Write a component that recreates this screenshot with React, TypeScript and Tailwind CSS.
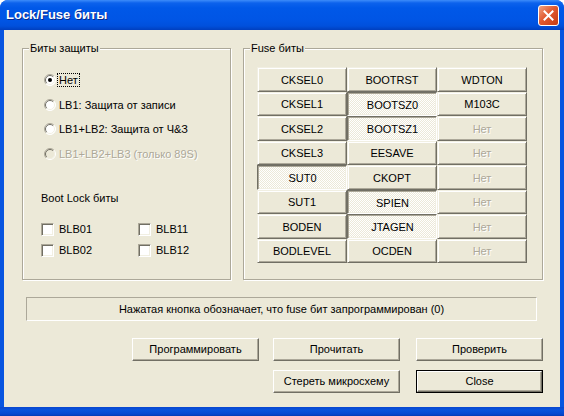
import type { ReactNode } from 'react';

type Fuse = { name: string; on?: boolean; off?: boolean };

const fuses: Fuse[] = [
  { name: 'CKSEL0' }, { name: 'BOOTRST' }, { name: 'WDTON' },
  { name: 'CKSEL1' }, { name: 'BOOTSZ0', on: true }, { name: 'M103C' },
  { name: 'CKSEL2' }, { name: 'BOOTSZ1', on: true }, { name: 'Нет', off: true },
  { name: 'CKSEL3' }, { name: 'EESAVE' }, { name: 'Нет', off: true },
  { name: 'SUT0', on: true }, { name: 'CKOPT' }, { name: 'Нет', off: true },
  { name: 'SUT1' }, { name: 'SPIEN', on: true }, { name: 'Нет', off: true },
  { name: 'BODEN' }, { name: 'JTAGEN', on: true }, { name: 'Нет', off: true },
  { name: 'BODLEVEL' }, { name: 'OCDEN' }, { name: 'Нет', off: true },
];

const raised =
  'flex items-center justify-center pt-[1px] border border-t-[#f1efe2] border-l-[#f1efe2] border-r-[#716f64] border-b-[#716f64] shadow-[inset_1px_1px_0_#fff,inset_-1px_-1px_0_#aca899] bg-[#ece9d8]';
const pressed =
  'flex items-center justify-center pt-[2px] pl-[1px] border border-t-[#716f64] border-l-[#716f64] border-r-white border-b-white shadow-[inset_1px_1px_0_#aca899,inset_-1px_-1px_0_#f1efe2] bg-[image:repeating-conic-gradient(#fff_0_25%,#ece9d8_0_50%)] bg-[length:2px_2px]';

function GroupBox({ label, className, children }: { label: string; className: string; children: ReactNode }) {
  return (
    <div className={'relative h-full border border-[#aca899] shadow-[inset_1px_1px_0_#fff,1px_1px_0_#fff] ' + className}>
      <span className="absolute -top-[7px] left-[6px] px-[1px] bg-[#ece9d8] leading-[13px]">{label}</span>
      {children}
    </div>
  );
}

function Radio({ checked, disabled }: { checked?: boolean; disabled?: boolean }) {
  return (
    <svg width="12" height="12" viewBox="0 0 12 12" className="shrink-0">
      <circle cx="6" cy="6" r="5.5" fill={disabled ? '#ece9d8' : '#fff'} />
      <path d="M2.1 9.9A5.5 5.5 0 0 1 9.9 2.1" fill="none" stroke="#aca899" />
      <path d="M9.9 2.1A5.5 5.5 0 0 1 2.1 9.9" fill="none" stroke="#fff" />
      <path d="M2.8 9.2A4.5 4.5 0 0 1 9.2 2.8" fill="none" stroke="#716f64" />
      <path d="M9.2 2.8A4.5 4.5 0 0 1 2.8 9.2" fill="none" stroke="#f1efe2" />
      {checked && <circle cx="6" cy="6" r="2" fill="#000" />}
    </svg>
  );
}

function Check({ label }: { label: string }) {
  return (
    <div className="flex items-center h-[21px] w-[97px]">
      <div className="w-[13px] h-[13px] border border-t-[#aca899] border-l-[#aca899] border-r-white border-b-white shadow-[inset_1px_1px_0_#716f64,inset_-1px_-1px_0_#f1efe2] bg-white" />
      <span className="ml-[5px]">{label}</span>
    </div>
  );
}

function Button({ label, isDefault }: { label: string; isDefault?: boolean }) {
  if (isDefault)
    return (
      <div className="w-[127px] h-[23px] border border-black">
        <div className="h-full flex items-center justify-center border border-t-white border-l-white border-r-[#716f64] border-b-[#716f64] shadow-[inset_-1px_-1px_0_#aca899] bg-[#ece9d8]">
          {label}
        </div>
      </div>
    );
  return (
    <div className="w-[127px] h-[23px] flex items-center justify-center border border-t-white border-l-white border-r-[#716f64] border-b-[#716f64] shadow-[inset_-1px_-1px_0_#aca899] bg-[#ece9d8]">
      {label}
    </div>
  );
}

export default function App() {
  const radios = [
    { label: 'Нет', checked: true },
    { label: 'LB1: Защита от записи' },
    { label: 'LB1+LB2: Защита от Ч&З' },
    { label: 'LB1+LB2+LB3 (только 89S)', disabled: true },
  ];

  return (
    <div className="w-[564px] h-[416px] flex flex-col rounded-t-[8px] overflow-hidden bg-[#0855e0] font-['Liberation_Sans',Arial,sans-serif] text-[11px] text-black">
      {/* title bar */}
      <div className="h-[30px] shrink-0 flex items-center pl-[6px] pr-[5px] bg-[linear-gradient(to_bottom,#3d8cfa_0px,#0c62ec_3px,#0058e8_8px,#0055e5_20px,#0050dc_26px,#003fbf_30px)]">
        <span className="flex-1 text-white font-bold text-[13px] [text-shadow:1px_1px_0_#0a2a8a]">Lock/Fuse биты</span>
        <div className="w-[21px] h-[21px] rounded-[3px] border border-white flex items-center justify-center bg-[linear-gradient(135deg,#f0a383_0%,#e15a30_45%,#c53a12_100%)]">
          <svg width="11" height="11" viewBox="0 0 11 11">
            <path d="M1.5 1.5L9.5 9.5M9.5 1.5L1.5 9.5" stroke="#fff" strokeWidth="2" strokeLinecap="square" />
          </svg>
        </div>
      </div>

      {/* client */}
      <div className="h-[377px] shrink-0 mx-[4px] bg-[#ece9d8] pt-[18px] pl-[18px]">
        <div className="flex gap-[12px] h-[232px]">
          <GroupBox label="Биты защиты" className="w-[209px]">
            <div className="pt-[19px] pl-[21px]">
              {radios.map((r) => (
                <div key={r.label} className="flex items-center h-[24.5px]">
                  <Radio checked={r.checked} disabled={r.disabled} />
                  <span
                    className={
                      r.checked
                        ? 'ml-[1px] px-[1px] leading-[12px] border border-dotted border-black'
                        : r.disabled
                        ? 'ml-[1px] px-[1px] leading-[12px] border border-transparent text-[#aca899] [text-shadow:1px_1px_0_#fff]'
                        : 'ml-[1px] px-[1px] leading-[12px] border border-transparent'
                    }
                  >
                    {r.label}
                  </span>
                </div>
              ))}
            </div>
            <div className="pl-[18px] mt-[25px] h-[14px] leading-[14px]">Boot Lock биты</div>
            <div className="pl-[18px] mt-[14px] grid grid-cols-[97px_97px]">
              <Check label="BLB01" />
              <Check label="BLB11" />
              <Check label="BLB02" />
              <Check label="BLB12" />
            </div>
          </GroupBox>

          <GroupBox label="Fuse биты" className="w-[300px]">
            <div className="pt-[18px] pl-[13px]">
              <div className="grid grid-cols-[90px_90px_90px] grid-rows-8 h-[196px] w-[270px]">
                {fuses.map((f, i) =>
                  f.off ? (
                    <div key={i} className={raised + ' text-[#aca899] [text-shadow:1px_1px_0_#fff]'}>
                      {f.name}
                    </div>
                  ) : (
                    <div key={i} className={f.on ? pressed : raised}>
                      {f.name}
                    </div>
                  )
                )}
              </div>
            </div>
          </GroupBox>
        </div>

        <div className="ml-[4px] mt-[17px] w-[511px] h-[24px] flex items-center justify-center border border-t-[#aca899] border-l-[#aca899] border-r-white border-b-white">
          Нажатая кнопка обозначает, что fuse бит запрограммирован (0)
        </div>

        <div className="mt-[17px] ml-[110px] flex flex-col gap-[9px]">
          <div className="flex">
            <Button label="Программировать" />
            <div className="ml-[14px]"><Button label="Прочитать" /></div>
            <div className="ml-[16px]"><Button label="Проверить" /></div>
          </div>
          <div className="flex">
            <div className="ml-[141px]"><Button label="Стереть микросхему" /></div>
            <div className="ml-[16px]"><Button label="Close" isDefault /></div>
          </div>
        </div>
      </div>

      {/* bottom frame */}
      <div className="flex-1 bg-[linear-gradient(to_bottom,#0a47cf_0px,#0753dc_3px,#0548d0_7px,#033bb4_9px)]" />
    </div>
  );
}
